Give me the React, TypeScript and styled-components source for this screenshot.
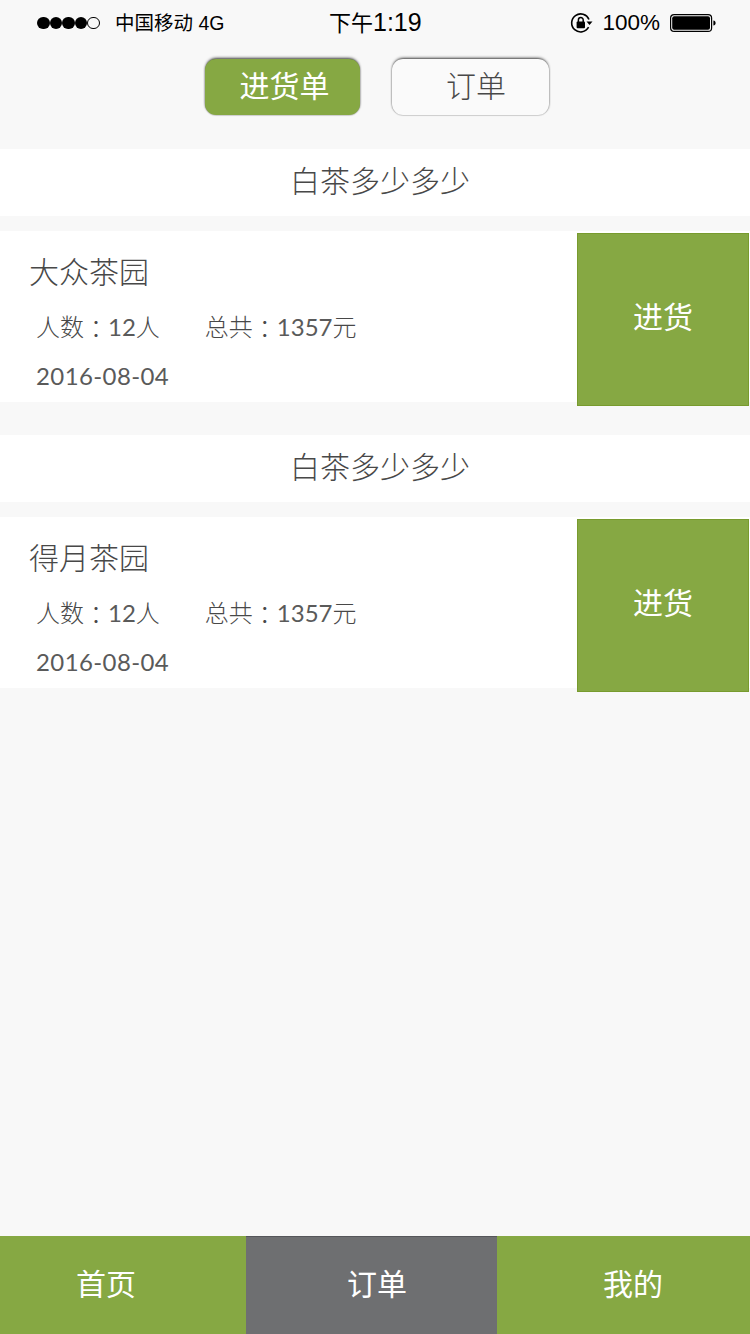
import React from "react";
import styled, {createGlobalStyle} from "styled-components";

const GREEN = "#86a843";
const TEXT = "#484848";
const CJK = `"Noto Sans CJK SC", sans-serif`;

const GlobalStyle = createGlobalStyle`
	html, body {
		margin: 0;
		padding: 0;
		background: #f8f8f8;
	}
	* {
		box-sizing: border-box;
	}
`;

const Page = styled.div`
	position: relative;
	width: 750px;
	height: 1334px;
	display: flex;
	flex-direction: column;
	overflow: hidden;
	background: #f8f8f8;
	font-family: Lato, ${CJK};
	font-weight: 300;
	color: ${TEXT};
`;

const StatusBar = styled.div`
	display: grid;
	grid-template-columns: 329px 92px 1fr;
	align-items: center;
	height: 46px;
	color: #000;
	font-family: "Liberation Sans", ${CJK};
	font-weight: 400;
`;

const StatusLeft = styled.div`
	display: flex;
	align-items: center;
	padding-left: 37px;
`;

const Dots = styled.div`
	display: flex;
	margin-right: 15px;
`;

const Dot = styled.span<{$empty?: boolean}>`
	width: 12.6px;
	height: 12.6px;
	border-radius: 50%;
	background: ${(p) => (p.$empty ? "transparent" : "#000")};
	border: ${(p) => (p.$empty ? "1.5px solid #000" : "none")};
`;

const Carrier = styled.span`
	padding-bottom: 4px;
	font-size: 19.5px;
	white-space: nowrap;
`;

const Clock = styled.span`
	padding-bottom: 5px;
	font-size: 22px;
	white-space: nowrap;
`;

const ClockDigits = styled.span`
	font-size: 25px;
`;

const StatusRight = styled.div`
	display: flex;
	align-items: center;
	justify-content: flex-end;
	padding-right: 34px;
`;

const Percent = styled.span`
	font-size: 22.5px;
	margin: 0 10px 0 9px;
`;

const Tabs = styled.div`
	display: flex;
	gap: 32px;
	margin-top: 13px;
	padding-left: 205px;
`;

const Tab = styled.div<{$active?: boolean}>`
	display: flex;
	align-items: center;
	justify-content: center;
	width: ${(p) => (p.$active ? "155px" : "157px")};
	height: 56px;
	padding: 0 0 7px ${(p) => (p.$active ? "4px" : "11px")};
	border-radius: 11px;
	font-size: 30px;
	font-weight: ${(p) => (p.$active ? 400 : 300)};
	background: ${(p) => (p.$active ? GREEN : "#fafafa")};
	color: ${(p) => (p.$active ? "#fff" : TEXT)};
	box-shadow: 0 -2px 3px -1px rgba(30, 30, 30, 0.85), 1px 0 2px -1px rgba(0, 0, 0, 0.5),
		-1px 0 2px -1px rgba(0, 0, 0, 0.5), 0 1px 1px rgba(0, 0, 0, 0.12);
`;

const Shop = styled.section`
	margin-top: 33px;
	&:first-of-type {
		margin-top: 34px;
	}
`;

const ShopHead = styled.div`
	display: flex;
	align-items: center;
	justify-content: center;
	height: 67px;
	padding: 0 0 8px 10px;
	background: #fff;
	font-size: 30px;
`;

const Card = styled.div`
	display: flex;
	justify-content: space-between;
	align-items: flex-start;
	height: 171px;
	margin-top: 15px;
	background: #fff;
`;

const CardInfo = styled.div`
	display: flex;
	flex-direction: column;
	padding: 19px 0 0 29px;
`;

const Garden = styled.div`
	font-size: 30px;
	line-height: 42px;
`;

const Meta = styled.div`
	display: flex;
	gap: 45px;
	margin-top: 16px;
	padding-left: 7px;
	font-size: 24px;
	line-height: 36px;
`;

const Colon = styled.span`
	display: inline-block;
	font-family: "Noto Sans CJK TC", sans-serif;
	transform: translateY(2px);
`;

const Num = styled.span`
	font-weight: 400;
	color: #5a5a5a;
`;

const DateLine = styled.div`
	margin-top: 13px;
	padding-left: 7px;
	font-size: 24px;
	font-weight: 400;
	line-height: 36px;
	letter-spacing: 0.4px;
	color: #5a5a5a;
`;

const RestockButton = styled.div`
	flex: none;
	display: flex;
	align-items: center;
	justify-content: center;
	width: 172px;
	height: 173px;
	margin: 2px 1px 0 0;
	padding-bottom: 10px;
	border: 1px solid #789b2e;
	background: ${GREEN};
	color: #fff;
	font-size: 30px;
	font-weight: 400;
`;

const BottomBar = styled.nav`
	display: grid;
	grid-template-columns: 246px 251px 253px;
	height: 98px;
	margin-top: auto;
`;

const BarItem = styled.div<{$active?: boolean; $shift: number}>`
	display: flex;
	align-items: center;
	justify-content: center;
	padding-bottom: 8px;
	padding-left: ${(p) => Math.max(p.$shift, 0)}px;
	padding-right: ${(p) => Math.max(-p.$shift, 0)}px;
	background: ${(p) => (p.$active ? "#6e6f71" : GREEN)};
	border-top: 1px solid ${(p) => (p.$active ? "#55565a" : GREEN)};
	color: #fff;
	font-size: 30px;
	font-weight: 400;
`;

const RotationLock = () => (
	<svg width="23" height="22" viewBox="0 0 23 22" fill="none">
		<path d="M18.6 15.2A9 9 0 1 1 19 7.5" stroke="#000" strokeWidth="1.6" />
		<path d="M16.5 9.5h6l-3 3.6z" fill="#000" />
		<rect x="6.6" y="9.6" width="8.4" height="6.6" rx="1" fill="#000" />
		<path d="M8.4 10V7.9a2.4 2.4 0 0 1 4.8 0V10" stroke="#000" strokeWidth="1.5" />
	</svg>
);

const Battery = () => (
	<svg width="46" height="18" viewBox="0 0 46 18">
		<rect x="0.6" y="0.6" width="41" height="16.8" rx="3.5" fill="none" stroke="#000" strokeWidth="1.2" />
		<rect x="2.2" y="2.2" width="37.8" height="13.6" rx="2" fill="#000" />
		<path d="M43.4 6.5c1.4.2 2.2 1.2 2.2 2.5s-.8 2.3-2.2 2.5z" fill="#000" />
	</svg>
);

const orders = [
	{garden: "大众茶园", people: "12", total: "1357", date: "2016-08-04"},
	{garden: "得月茶园", people: "12", total: "1357", date: "2016-08-04"},
];

export default function App() {
	return (
		<Page>
			<GlobalStyle />
			<StatusBar>
				<StatusLeft>
					<Dots>
						<Dot />
						<Dot />
						<Dot />
						<Dot />
						<Dot $empty />
					</Dots>
					<Carrier>中国移动 4G</Carrier>
				</StatusLeft>
				<Clock>
					下午<ClockDigits>1:19</ClockDigits>
				</Clock>
				<StatusRight>
					<RotationLock />
					<Percent>100%</Percent>
					<Battery />
				</StatusRight>
			</StatusBar>
			<Tabs>
				<Tab $active>进货单</Tab>
				<Tab>订单</Tab>
			</Tabs>
			{orders.map((order) => (
				<Shop key={order.garden}>
					<ShopHead>白茶多少多少</ShopHead>
					<Card>
						<CardInfo>
							<Garden>{order.garden}</Garden>
							<Meta>
								<span>
									人数<Colon>：</Colon>
									<Num>{order.people}</Num>人
								</span>
								<span>
									总共<Colon>：</Colon>
									<Num>{order.total}</Num>元
								</span>
							</Meta>
							<DateLine>{order.date}</DateLine>
						</CardInfo>
						<RestockButton>进货</RestockButton>
					</Card>
				</Shop>
			))}
			<BottomBar>
				<BarItem $shift={-34}>首页</BarItem>
				<BarItem $active $shift={11}>订单</BarItem>
				<BarItem $shift={19}>我的</BarItem>
			</BottomBar>
		</Page>
	);
}
